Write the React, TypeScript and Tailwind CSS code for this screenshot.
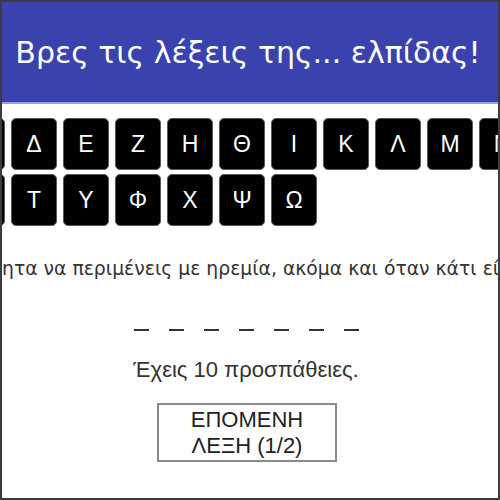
const row1 = ['Α', 'Β', 'Γ', 'Δ', 'Ε', 'Ζ', 'Η', 'Θ', 'Ι', 'Κ', 'Λ', 'Μ', 'Ν', 'Ξ', 'Ο'];
const row2 = ['Π', 'Ρ', 'Σ', 'Τ', 'Υ', 'Φ', 'Χ', 'Ψ', 'Ω'];

function Key({ letter }: { letter: string }) {
  return (
    <button className="w-[46px] h-[52px] shrink-0 rounded-[5px] bg-black border border-[#5a5a5a] text-white text-[23px] leading-none flex items-center justify-center">
      {letter}
    </button>
  );
}

export default function App() {
  return (
    <div className="w-[500px] h-[500px] border-2 border-[#3c3c3c] overflow-hidden bg-white flex flex-col font-['Liberation_Sans',Arial,sans-serif]">
      {/* Header */}
      <div className="h-[102px] shrink-0 bg-[#3a43ad] border-b-2 border-[#9aa0dc] flex items-center justify-center pr-[4px]">
        <h1 className="text-white text-[30px] whitespace-nowrap font-['DejaVu_Sans',sans-serif]">Βρες τις λέξεις της... ελπίδας!</h1>
      </div>

      {/* Keyboard */}
      <div className="mt-[14px] ml-[-147px] w-[774px] shrink-0 flex flex-col gap-[4px]">
        <div className="flex gap-[6px]">
          {row1.map((l) => (
            <Key key={l} letter={l} />
          ))}
        </div>
        <div className="flex gap-[6px]">
          {row2.map((l) => (
            <Key key={l} letter={l} />
          ))}
        </div>
      </div>

      {/* Hint */}
      <div className="mt-[31px] flex whitespace-nowrap text-[18.8px] leading-[24px] text-[#333] font-['DejaVu_Sans',sans-serif]">
        <span className="w-0 shrink-0 flex justify-end">Η υπομονή είναι η ικανότ</span>
        <span className="shrink-0">ητα να περιμένεις με ηρεμία, ακόμα και όταν κάτι είναι δύσκολο.</span>
      </div>

      {/* Word blanks */}
      <div className="mt-[48px] flex justify-center gap-[20px] pr-[8px]">
        {Array.from({ length: 7 }).map((_, i) => (
          <span key={i} className="w-[15px] h-[2px] bg-[#333]" />
        ))}
      </div>

      <p className="mt-[26px] text-center text-[22px] leading-[25px] text-[#333] pr-[8px]">Έχεις 10 προσπάθειες.</p>

      <div className="mt-[21px] flex justify-center pr-[6px]">
        <button className="w-[180px] h-[59px] border-2 border-[#8a8a8a] bg-white text-[#222] text-[22px] leading-[26px]">
          ΕΠΟΜΕΝΗ
          <br />
          ΛΕΞΗ (1/2)
        </button>
      </div>
    </div>
  );
}
